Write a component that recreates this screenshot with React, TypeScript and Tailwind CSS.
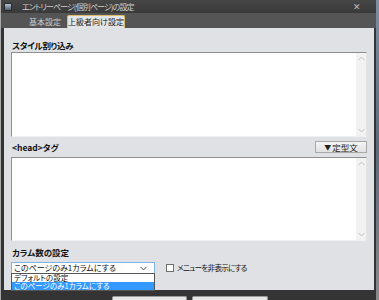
import React from "react";

const jp = "font-['Noto_Sans_CJK_JP','Noto_Sans',sans-serif] [font-feature-settings:'palt']";

/* ---------------- small glyphs ---------------- */
const Chevron = ({ up = false, className = "" }: { up?: boolean; className?: string }) => (
  <svg width="7" height="5" viewBox="0 0 7 5" className={className}>
    <path d={up ? "M0.5 4.2 L3.5 1 L6.5 4.2" : "M0.5 0.8 L3.5 4 L6.5 0.8"} fill="none" stroke="currentColor" strokeWidth="1" />
  </svg>
);

const TextBox = ({ h }: { h: string }) => (
  <div className={`flex ${h} bg-white border border-t-[#8f8f8f] border-l-[#8f8f8f] border-r-[#e2e4e7] border-b-[#eef0f2]`}>
    <div className="flex-1" />
    <div className="w-[10px] bg-[#f2f2f2] flex flex-col items-center justify-between py-[3px] text-[#c2c2c2]">
      <Chevron up />
      <Chevron />
    </div>
  </div>
);

/* ---------------- App ---------------- */
export default function App() {
  return (
    <div className={`w-[379px] h-[300px] flex overflow-hidden bg-[#2c2c2c] ${jp}`}>
      <div className="w-px bg-[#a9a9a9]" />

      {/* window */}
      <div className="w-[375px] flex flex-col bg-[#343434]">
        {/* title bar */}
        <div className="h-[13px] flex items-center bg-gradient-to-b from-[#464646] to-[#3a3a3a] pl-[3px] pr-[15px]">
          <div className="w-[8px] h-[8px] rounded-[1px] bg-gradient-to-b from-[#b9c6d6] to-[#4f5d70] border border-[#2a2a2a]" />
          <span className="ml-[10px] text-[8px] leading-none text-[#d0d0d0] tracking-[-0.9px]">
            エントリーページ(個別ページ)の設定
          </span>
          <span className="ml-auto text-[9px] leading-none text-[#bdbdbd]">✕</span>
        </div>

        {/* tab bar */}
        <div className="h-[15px] flex items-end bg-[#555555] pl-[27px]">
          <div className="h-[13px] w-[34px] flex items-center justify-center text-[8px] leading-none text-[#c9c9c9]">
            基本設定
          </div>
          <div className="ml-[5px] h-[13px] w-[58px] flex items-center justify-center rounded-t-[2px] border border-b-0 border-[#d9bb6a] bg-[#e4e5e7] text-[8px] leading-none text-[#222]">
            上級者向け設定
          </div>
        </div>

        {/* panel */}
        <div className="relative flex-1 ml-[3px] mr-[2px] bg-[#dfe1e4] px-[7px] flex flex-col">
          <div className="h-[24px] flex items-end pb-[3px] pl-px text-[8.5px] font-bold leading-none tracking-[-0.3px] text-[#111]">
            スタイル割り込み
          </div>
          <TextBox h="h-[85px]" />

          <div className="h-[20px] flex items-center justify-between pl-px">
            <span className="text-[8.5px] font-bold leading-none text-[#111]">&lt;head&gt;タグ</span>
            <button className="h-[12px] w-[52px] flex items-center justify-center border border-[#a9a9a9] bg-gradient-to-b from-[#f4f4f4] to-[#e2e2e2] text-[8.5px] leading-none text-[#222]">
              <span className="text-[7px] mr-px">▼</span>定型文
            </button>
          </div>
          <TextBox h="h-[84px]" />

          <div className="h-[21px] flex items-center pt-[2px] pl-px text-[8.5px] font-bold leading-none text-[#111]">
            カラム数の設定
          </div>

          <div className="flex items-center">
            <div className="relative w-[144px] h-[12px] flex items-center justify-between bg-white border border-[#7fb2e6] pl-[2px] pr-[7px] text-[8px] leading-none text-[#111]">
              このページのみ1カラムにする
              <Chevron className="text-[#4a5a70]" />
              {/* open list */}
              <div className="absolute left-[-1px] top-full w-[144px] border border-[#555] bg-white text-[7.5px] leading-none z-10">
                <div className="h-[8px] flex items-center pl-[2px] text-[#111]">デフォルトの設定</div>
                <div className="h-[8px] flex items-center pl-[2px] bg-[#3399ff] text-white">このページのみ1カラムにする</div>
              </div>
            </div>
            <div className="ml-[11px] w-[8px] h-[8px] bg-white border border-[#707070]" />
            <span className="ml-[3px] text-[7.5px] leading-none tracking-[-0.7px] text-[#111]">メニューを非表示にする</span>
          </div>
        </div>

        {/* footer */}
        <div className="h-[10px] flex items-end justify-center gap-[5px] pl-[3px]">
          <div className="w-[75px] h-[4px] rounded-t-[2px] border border-b-0 border-[#9a9a9a] bg-[#e6e6e6]" />
          <div className="w-[76px] h-[4px] rounded-t-[2px] border border-b-0 border-[#9a9a9a] bg-[#e6e6e6]" />
        </div>
      </div>

      <div className="flex-1 bg-gradient-to-b from-[#7e8da3] via-[#5f6b7c] to-[#8a8a8a]" />
    </div>
  );
}
